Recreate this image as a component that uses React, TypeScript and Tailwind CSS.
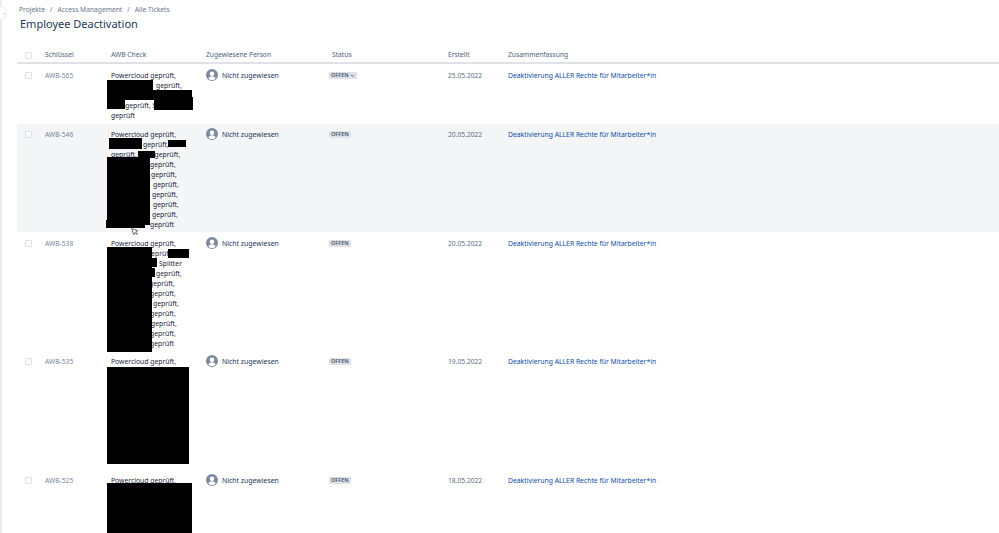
const fontCls = "font-['Noto_Sans','Open_Sans',sans-serif]";

type Row = {
  id: string;
  date: string;
  open?: boolean;
  shade?: boolean;
  cursor?: boolean;
  rowCls: string;
  lines: { text: string; cls: string }[];
  blocks: string[];
};

const rows: Row[] = [
  {
    id: "AWB-565",
    date: "25.05.2022",
    open: true,
    rowCls: "h-[60px] pt-[7px]",
    lines: [
      { text: "Powercloud geprüft,", cls: "pl-0" },
      { text: "geprüft,", cls: "pl-[45px]" },
      { text: "\u00a0", cls: "pl-0" },
      { text: "geprüft, S", cls: "pl-[14px]" },
      { text: "geprüft", cls: "pl-0" },
    ],
    blocks: [
      "left-[-4px] top-[9px] w-[46px] h-[10px]",
      "left-[-4px] top-[19px] w-[85px] h-[10px]",
      "left-[-4px] top-[29px] w-[18px] h-[9px]",
      "left-[43px] top-[26px] w-[39px] h-[13px]",
    ],
  },
  {
    id: "AWB-546",
    date: "20.05.2022",
    shade: true,
    cursor: true,
    rowCls: "h-[108px] pt-[6px]",
    lines: [
      { text: "Powercloud geprüft,", cls: "pl-0" },
      { text: "geprüft,", cls: "pl-[32px]" },
      { text: "geprüft,\u00a0\u00a0\u00a0\u00a0\u00a0\u00a0\u00a0\u00a0\u00a0\u00a0geprüft,", cls: "pl-0" },
      { text: "geprüft,", cls: "pl-[39px]" },
      { text: "geprüft,", cls: "pl-[40px]" },
      { text: "geprüft,", cls: "pl-[42px]" },
      { text: "geprüft,", cls: "pl-[41px]" },
      { text: "geprüft,", cls: "pl-[42px]" },
      { text: "geprüft,", cls: "pl-[41px]" },
      { text: "geprüft", cls: "pl-[39px]" },
    ],
    blocks: [
      "left-[-2px] top-[8px] w-[33px] h-[11px]",
      "left-[57px] top-[10px] w-[18px] h-[7px]",
      "left-[27px] top-[21px] w-[17px] h-[7px]",
      "left-[-4px] top-[27px] w-[43px] h-[68px]",
      "left-[-5px] top-[90px] w-[39px] h-[8px]",
    ],
  },
  {
    id: "AWB-538",
    date: "20.05.2022",
    rowCls: "h-[120px] pt-[7px]",
    lines: [
      { text: "Powercloud geprüft,", cls: "pl-0" },
      { text: "geprüft,", cls: "pl-[36px]" },
      { text: "Splitter", cls: "pl-[48px]" },
      { text: "geprüft,", cls: "pl-[45px]" },
      { text: "geprüft,", cls: "pl-[38px]" },
      { text: "geprüft,", cls: "pl-[39px]" },
      { text: "geprüft,", cls: "pl-[42px]" },
      { text: "geprüft,", cls: "pl-[39px]" },
      { text: "geprüft,", cls: "pl-[40px]" },
      { text: "geprüft,", cls: "pl-[39px]" },
      { text: "geprüft", cls: "pl-[39px]" },
    ],
    blocks: [
      "left-[-4px] top-[8px] w-[45px] h-[105px]",
      "left-[57px] top-[10px] w-[21px] h-[9px]",
      "left-[41px] top-[19px] w-[5px] h-[9px]",
      "left-[41px] top-[29px] w-[3px] h-[9px]",
    ],
  },
  {
    id: "AWB-535",
    date: "19.05.2022",
    rowCls: "h-[118px] pt-[5px]",
    lines: [{ text: "Powercloud geprüft,", cls: "pl-0" }],
    blocks: ["left-[-4px] top-[10px] w-[82px] h-[97px]"],
  },
  {
    id: "AWB-525",
    date: "18.05.2022",
    rowCls: "h-[63px] pt-[6px]",
    lines: [{ text: "Powercloud geprüft,", cls: "pl-0" }],
    blocks: ["left-[-4px] top-[7px] w-[85px] h-[50px]"],
  },
];

function Check() {
  return <span className="block w-[7px] h-[7px] rounded-[1px] border border-[#dfe1e6] bg-[#fafbfc]" />;
}

function Avatar() {
  return (
    <svg viewBox="0 0 24 24" className="w-[12px] h-[12px] shrink-0 -mt-[2px]">
      <circle cx="12" cy="12" r="12" fill="#7f8a9e" />
      <circle cx="12" cy="9.5" r="4.4" fill="#ffffff" />
      <path d="M4.8 20c.6-3.8 3.4-5.6 7.2-5.6s6.6 1.8 7.2 5.6A10 10 0 0 1 12 22a10 10 0 0 1-7.2-2z" fill="#ffffff" />
    </svg>
  );
}

export default function App() {
  return (
    <div className={`relative h-[533px] w-[999px] overflow-hidden bg-white text-[6.7px] leading-[10px] text-[#172b4d] ${fontCls}`}>
      <div className="absolute left-0 top-0 h-full w-[2px] bg-[#ebecf0]" />
      <div className="absolute left-[-7px] top-[6px] flex h-[14px] w-[14px] items-center justify-end rounded-full border border-[#ebecf0] bg-white pr-[1px] text-[5px] leading-none text-[#6b778c]">‹</div>

      <div className="pl-[17px]">
        <div className="flex h-[20px] items-center gap-[5px] pl-[2px] text-[#6b778c]">
          <span>Projekte</span>
          <span>/</span>
          <span>Access Management</span>
          <span>/</span>
          <span>Alle Tickets</span>
        </div>
        <h1 className="h-[28px] pl-[3px] text-[11px] leading-[8px] font-normal text-[#253858]">
          Employee Deactivation
        </h1>

        <div className="flex h-[16px] items-center border-b-2 border-[#dfe1e6] text-[#505f79]">
          <div className="w-[28px] pl-[8px]"><Check /></div>
          <div className="w-[66px]">Schlüssel</div>
          <div className="w-[95px]">AWB Check</div>
          <div className="w-[126px]">Zugewiesene Person</div>
          <div className="w-[116px]">Status</div>
          <div className="w-[60px]">Erstellt</div>
          <div>Zusammenfassung</div>
        </div>

        {rows.map((r) => (
          <div key={r.id} className={`flex items-start ${r.rowCls} ${r.shade ? "bg-[#f4f5f7]" : ""}`}>
            <div className="w-[28px] pl-[8px] pt-[1px]"><Check /></div>
            <div className="w-[66px] text-[#7a869a]">{r.id}</div>
            <div className="relative w-[95px] self-stretch text-[6.8px] text-[#1c2536]">
              {r.lines.map((l, i) => (
                <div key={i} className={`whitespace-nowrap ${l.cls}`}>{l.text}</div>
              ))}
              {r.blocks.map((b, i) => (
                <div key={i} className={`absolute bg-black ${b}`} />
              ))}
              {r.cursor && (
                <svg viewBox="0 0 12 12" className="absolute left-[20px] top-[98px] h-[8px] w-[8px]">
                  <path d="M1 1l3 9 2-3 3 3 1-1-3-3 3-2z" fill="#ffffff" stroke="#444b57" strokeWidth="1.2" />
                </svg>
              )}
            </div>
            <div className="flex w-[123px] items-center gap-[4px] text-[6.9px] text-[#253858]">
              <Avatar />
              <span>Nicht zugewiesen</span>
            </div>
            <div className="w-[119px] leading-[8px]">
              <span className="inline-flex h-[7px] items-center gap-[1px] rounded-[1px] bg-[#dfe1e6] px-[2px] text-[5.5px] font-semibold leading-none text-[#42526e]">
                OFFEN
                {r.open && (
                  <svg viewBox="0 0 8 8" className="h-[5px] w-[5px]">
                    <path d="M1.5 3l2.5 2.5L6.5 3" fill="none" stroke="#42526e" strokeWidth="1.4" />
                  </svg>
                )}
              </span>
            </div>
            <div className="w-[60px] text-[#5e6c84]">{r.date}</div>
            <div className="text-[6.8px] text-[#0b4da8]">Deaktivierung ALLER Rechte für Mitarbeiter*in</div>
          </div>
        ))}
      </div>
    </div>
  );
}
